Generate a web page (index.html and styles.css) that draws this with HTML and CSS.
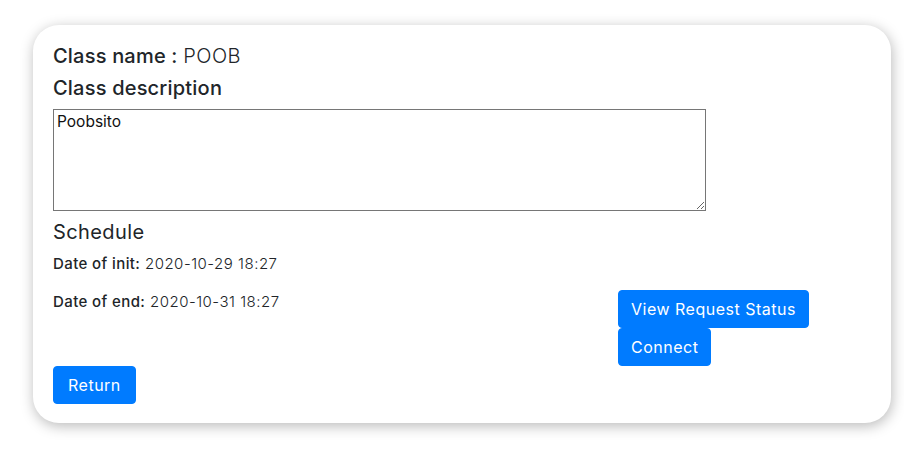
FILE: index.html
```html
<!DOCTYPE html>
<html lang="en">
<head>
<meta charset="utf-8">
<title>Class</title>
<link rel="stylesheet" href="styles.css">
</head>
<body>
<div class="page">
  <div class="card">
    <h5 class="title"><span class="label">Class name :</span> <span class="value">POOB</span></h5>
    <h5 class="title desc-title">Class description</h5>
    <textarea class="desc" readonly>Poobsito</textarea>
    <h5 class="title plain">Schedule</h5>
    <p class="line"><span class="label">Date of init:</span> <span class="value">2020-10-29 18:27</span></p>
    <div class="row">
      <p class="line"><span class="label">Date of end:</span> <span class="value">2020-10-31 18:27</span></p>
      <div class="actions">
        <button class="btn">View Request Status</button>
        <button class="btn">Connect</button>
      </div>
    </div>
    <div class="footer">
      <button class="btn btn-return">Return</button>
    </div>
  </div>
</div>
</body>
</html>
```
FILE: styles.css
```css
* { box-sizing: border-box; }
html, body { margin: 0; padding: 0; background: #fff; }
body {
  font-family: Inter, "Noto Sans", "DejaVu Sans", sans-serif;
  color: #212529;
  font-size: 16px;
  line-height: 1.5;
  min-height: 452px;
}
.page { padding: 25px 13px 29px 33px; }
.card {
  width: 858px;
  height: 398px;
  background: #fff;
  border-radius: 26px;
  box-shadow: 1px 3px 14px rgba(0, 0, 0, 0.28);
  padding: 19px 20px 20px 20px;
}
.title {
  margin: 0 0 8px 0;
  font-size: 20px;
  line-height: 24px;
  font-weight: 450;
  letter-spacing: 0.2px;
}
.title .value { font-weight: 300; letter-spacing: 0.5px; }
.title.plain { font-weight: 400; letter-spacing: 0.4px; }
.title.desc-title { margin-bottom: 9px; }
.desc {
  display: block;
  width: 653px;
  height: 102px;
  margin: 0 0 9px 0;
  border: 1px solid #767676;
  border-radius: 0;
  padding: 2px 3px;
  font-family: Inter, "Noto Sans", sans-serif;
  font-size: 15.5px;
  font-weight: 400;
  line-height: 1.3;
  color: #111;
  resize: vertical;
  background: #fff;
}
.line {
  margin: 0 0 14px 0;
  font-size: 15px;
  line-height: 24px;
  letter-spacing: 0.4px;
}
.line .label { font-weight: 500; }
.line .value { font-weight: 300; letter-spacing: 0.5px; }
.row {
  display: grid;
  grid-template-columns: 565px auto;
}
.row .line { margin: 0; }
.actions {
  display: flex;
  flex-direction: column;
  align-items: flex-start;
}
.btn {
  font-family: Inter, "Noto Sans", sans-serif;
  font-size: 16px;
  line-height: 24px;
  font-weight: 400;
  letter-spacing: 0.5px;
  color: #fff;
  background: #007bff;
  border: 1px solid #007bff;
  border-radius: 4px;
  padding: 6px 12px;
  height: 38px;
}
.btn-return { padding: 6px 14px; }
.footer { display: flex; }
```
